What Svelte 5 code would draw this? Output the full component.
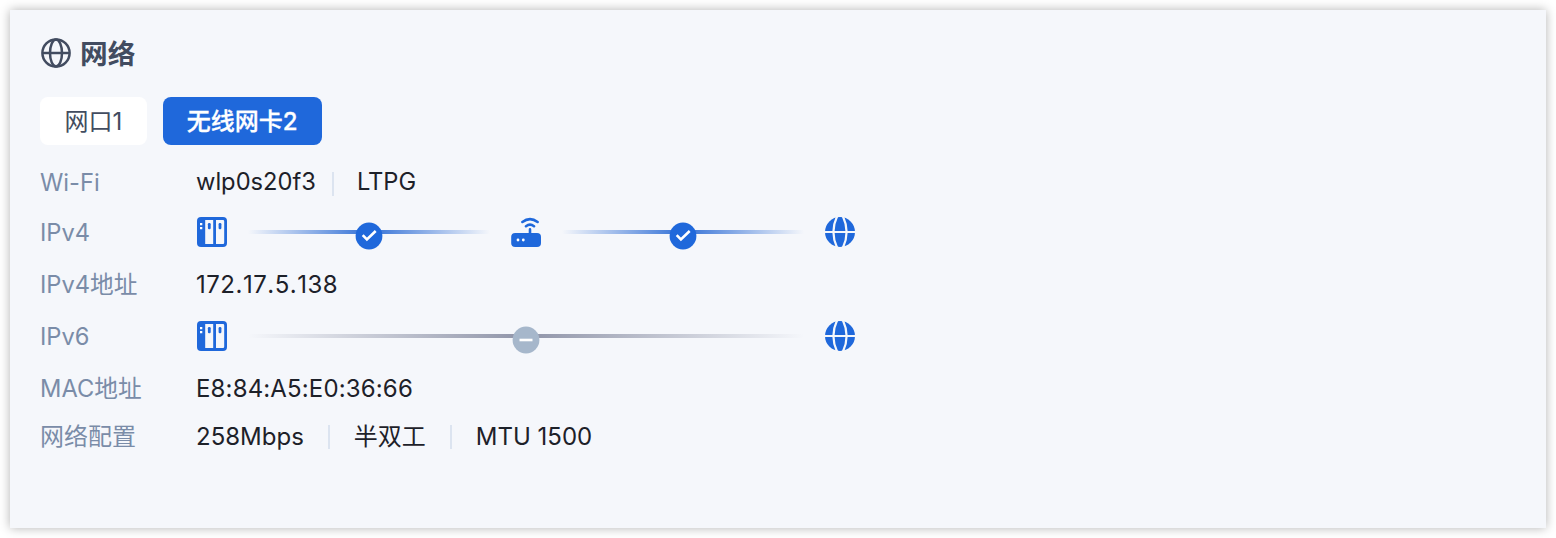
<script>
  let active = $state(1);

  const ports = ['网口1', '无线网卡2'];

  // each link sits between two device icons
  const ipv4 = ['nas', 'ok', 'router', 'ok', 'globe'];
  const ipv6 = ['nas', 'off', 'globe'];

  const rows = [
    { label: 'Wi-Fi', values: ['wlp0s20f3', 'LTPG'], cls: 'wifi' },
    { label: 'IPv4', path: ipv4 },
    { label: 'IPv4地址', values: ['172.17.5.138'], cls: 'address ip' },
    { label: 'IPv6', path: ipv6 },
    { label: 'MAC地址', values: ['E8:84:A5:E0:36:66'], cls: 'address mac' },
    { label: '网络配置', values: ['258Mbps', '半双工', 'MTU 1500'], cls: 'config' },
  ];
</script>

<section class="panel">
  <header>
    <svg class="title-icon" viewBox="0 0 32 32" fill="none" stroke="currentColor" stroke-width="2.5">
      <circle cx="16" cy="16" r="13.6" />
      <ellipse cx="16" cy="16" rx="6" ry="13.6" />
      <path d="M2.5 16h27" />
    </svg>
    <h2>网络</h2>
  </header>

  <div class="tabs">
    {#each ports as port, i}
      <button class="tab" class:active={active === i} onclick={() => (active = i)}>{port}</button>
    {/each}
  </div>

  <div class="rows">
    {#each rows as row}
      <div class="row {row.cls ?? ''}">
        <span class="label">{row.label}</span>
        {#if row.path}
          <div class="path">
            {#each row.path as part}
              {#if part === 'nas'}
                <svg class="device" viewBox="0 0 32 32">
                  <rect x="1" y="1" width="30" height="30" rx="4" fill="#1f68db" />
                  <path d="M9.2 4h8v24h-8zM20 4h7q1.2 0 1.2 1.2v21.6q0 1.2-1.2 1.2h-7z" fill="#f5f7fb" />
                  <path d="M4 7h2.3v2.2H4zM4 11h2.3v2.2H4z" fill="#fff" />
                  <rect x="11.9" y="7" width="2.8" height="6.2" rx="1.2" fill="#1f68db" />
                  <rect x="22.6" y="7" width="2.8" height="6.2" rx="1.2" fill="#1f68db" />
                </svg>
              {:else if part === 'router'}
                <svg class="device" viewBox="0 0 32 32">
                  <rect x="1.2" y="17" width="29.8" height="14" rx="4" fill="#1f68db" />
                  <path d="M20 13.4v5M12.4 6Q20 .2 27.6 6M16 10.2Q20 7.2 24 10.2" fill="none" stroke="#1f68db" stroke-width="2.6" stroke-linecap="round" />
                  <circle cx="8" cy="24" r="1.4" fill="#fff" />
                  <circle cx="13.3" cy="24" r="1.4" fill="#fff" />
                </svg>
              {:else if part === 'globe'}
                <svg class="device" viewBox="0 0 32 32">
                  <circle cx="16" cy="16" r="15" fill="#1f68db" />
                  <path d="M13.2 0Q5.6 16 13.2 32M18.8 0Q26.4 16 18.8 32M0 16h32" fill="none" stroke="#f5f7fb" stroke-width="2.2" />
                </svg>
              {:else}
                <div class="link {part}">
                  <svg class="badge" viewBox="0 0 28 28">
                    <circle cx="14" cy="14" r="13.4" />
                    {#if part === 'ok'}
                      <path d="M7.7 13.2l4.2 4.2 8.8-8.4" />
                    {:else}
                      <path d="M7.5 14h13" />
                    {/if}
                  </svg>
                </div>
              {/if}
            {/each}
          </div>
        {:else}
          <div class="values">
            {#each row.values as value}
              <span class="value">{value}</span>
            {/each}
          </div>
        {/if}
      </div>
    {/each}
  </div>
</section>

<style>
  :global(body) { background: #fff; }

  .panel {
    box-sizing: border-box;
    height: 518px;
    margin: 10px;
    padding: 24px 30px 0;
    background: #f5f7fb;
    box-shadow: 0 0 10px rgba(0, 0, 0, .3);
    font-family: Inter, 'Noto Sans CJK SC', sans-serif;
    font-size: 24px;
    color: #1d2129;
  }

  header {
    display: flex;
    align-items: center;
    gap: 8px;
    height: 38px;
    color: #424c60;
  }
  .title-icon { width: 32px; height: 32px; }
  h2 {
    margin: 0;
    padding-top: 2px;
    font-size: 27.7px;
    font-weight: 600;
    line-height: 38px;
  }

  .tabs {
    display: flex;
    gap: 16px;
    margin-top: 25px;
  }
  .tab {
    height: 48px;
    padding: 2px 24.5px 0;
    border: 0;
    border-radius: 8px;
    background: #fff;
    color: #424c60;
    font: inherit;
    line-height: 46px;
    cursor: pointer;
  }
  .tab.active {
    padding: 2px 24px 0;
    background: #1f68db;
    color: #fff;
    font-weight: 500;
    -webkit-text-stroke: .3px #fff;
  }

  .rows { margin-top: 13px; }
  .row {
    display: flex;
    align-items: center;
    height: 52px;
    line-height: 36px;
    white-space: nowrap;
  }
  .row.wifi { height: 48px; }
  .row.config { height: 46px; }
  .label {
    width: 156px;
    padding-top: 2px;
    color: #7a8ca8;
    font-size: 23.7px;
  }
  .config .label {
    padding-top: 0;
    font-size: 24px;
  }

  .values { display: flex; }
  .wifi .values { font-size: 23.7px; }
  .address .values { padding-top: 2px; }
  .ip .values {
    font-kerning: none;
    letter-spacing: .5px;
  }
  .mac .values { letter-spacing: .15px; }
  .value {
    display: flex;
    align-items: center;
  }
  .value + .value::before {
    content: '';
    width: 2px;
    height: 24px;
    margin: 0 24px;
    background: #dce4f0;
  }
  .wifi .value + .value::before { margin: 3px 23px 0 16px; }

  .path {
    display: flex;
    align-items: center;
    width: 660px;
  }
  .device {
    flex: none;
    width: 32px;
    height: 32px;
  }
  .link {
    position: relative;
    flex: 1;
    height: 4px;
    margin: 0 20px;
  }
  .link.ok { background: linear-gradient(90deg, transparent, #3270d6 50%, transparent); }
  .link.off { background: linear-gradient(90deg, transparent, #8f94a8 50%, transparent); }
  .badge {
    position: absolute;
    top: -8px;
    left: 50%;
    width: 28px;
    height: 28px;
    transform: translateX(-50%);
    fill: #1f68db;
  }
  .off .badge { fill: #a6b7cb; }
  .badge path {
    fill: none;
    stroke: #fff;
    stroke-width: 2.6;
  }
</style>
